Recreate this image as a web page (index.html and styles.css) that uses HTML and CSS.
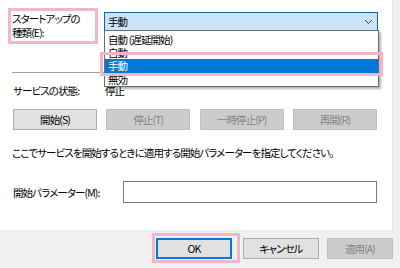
FILE: index.html
```html
<!DOCTYPE html>
<html lang="ja">
<head>
  <meta charset="UTF-8">
  <title>サービスのプロパティ</title>
  <link rel="stylesheet" href="styles.css">
</head>
<body>
  <div class="dialog">
    <div class="panel">
      <div class="startup-row">
        <div class="startup-label mark">スタートアップの<br>種類(E):</div>
        <div class="combo-wrap">
          <div class="combo">
            <span>手動</span>
            <svg class="chevron" width="9" height="6" viewBox="0 0 9 6"><path d="M1 1 L4.5 4.5 L8 1" fill="none" stroke="#444" stroke-width="1"/></svg>
          </div>
          <ul class="droplist">
            <li>自動 (遅延開始)</li>
            <li>自動</li>
            <li class="selected">手動</li>
            <li>無効</li>
          </ul>
          <div class="item-mark"></div>
        </div>
      </div>

      <div class="separator"></div>

      <div class="status-row">
        <span class="status-label">サービスの状態:</span>
        <span>停止</span>
      </div>

      <div class="service-buttons">
        <button class="btn">開始(S)</button>
        <button class="btn" disabled>停止(T)</button>
        <button class="btn" disabled>一時停止(P)</button>
        <button class="btn" disabled>再開(R)</button>
      </div>

      <p class="note">ここでサービスを開始するときに適用する開始パラメーターを指定してください。</p>

      <div class="param-row">
        <label class="param-label">開始パラメーター(M):</label>
        <div class="param-input"></div>
      </div>
    </div>

    <div class="footer">
      <span class="ok-mark"><button class="btn btn-default">OK</button></span>
      <button class="btn btn-footer">キャンセル</button>
      <button class="btn btn-footer" disabled>適用(A)</button>
    </div>
  </div>
</body>
</html>
```

FILE: styles.css
```css
body {
  margin: 0;
  width: 400px;
  height: 268px;
  overflow: hidden;
  background: #f0f0f0;
  font-family: "Noto Sans CJK JP", "Noto Sans", sans-serif;
  font-size: 10.5px;
  letter-spacing: -0.9px;
  font-feature-settings: "palt";
  color: #000;
}

.dialog {
  display: flex;
  flex-direction: column;
}

.panel {
  width: 393px;
  height: 230px;
  background: #fff;
  border-right: 1px solid #e3e3e3;
  padding-top: 8px;
  box-sizing: border-box;
}

/* スタートアップの種類 */
.startup-row {
  display: flex;
  align-items: flex-start;
  padding-left: 8px;
}

.mark {
  border: 3px solid #f3b5cd;
}

.startup-label {
  width: 83px;
  height: 29px;
  padding: 1px 0 0 1px;
  line-height: 14px;
}

.combo-wrap {
  position: relative;
  margin: 4px 0 0 6px;
}

.combo {
  width: 265px;
  height: 17px;
  line-height: 17px;
  border: 1px solid #1a5fa0;
  background: #cce4f7;
  display: flex;
  align-items: center;
  justify-content: space-between;
  padding: 0 4px 0 3px;
}

.droplist {
  position: absolute;
  top: 18px;
  left: 0;
  width: 273px;
  margin: 0;
  padding: 2px 0 0;
  list-style: none;
  background: #fff;
  border: 1px solid #6e6e6e;
  box-shadow: 2px 2px 2px rgba(0, 0, 0, 0.3);
  z-index: 2;
}

.droplist li {
  height: 13px;
  line-height: 13px;
  padding-left: 3px;
}

.droplist li.selected {
  background: #0078d7;
  color: #fff;
  height: 14px;
}

.item-mark {
  position: absolute;
  top: 40px;
  left: -4px;
  width: 277px;
  height: 18px;
  border: 3px solid #f3b5cd;
  z-index: 3;
}

.separator {
  border-top: 1px solid #a0a0a0;
  margin: 28px 15px 0 12px;
}

.status-row {
  display: flex;
  padding-left: 13px;
  margin-top: 11px;
  line-height: 14px;
}

.status-label {
  width: 92px;
}

.service-buttons {
  display: flex;
  justify-content: space-between;
  margin: 11px 15px 0 13px;
}

.btn {
  font: inherit;
  letter-spacing: inherit;
  font-feature-settings: "palt";
  width: 84px;
  height: 21px;
  padding: 0;
  background: #e1e1e1;
  border: 1px solid #adadad;
  color: #000;
}

.btn:disabled {
  background: #cccccc;
  border-color: #bfbfbf;
  color: #838383;
}

.note {
  margin: 16px 0 0 12px;
  line-height: 14px;
}

.param-row {
  display: flex;
  align-items: center;
  margin: 21px 15px 0 13px;
}

.param-label {
  width: 110px;
}

.param-input {
  flex: 1;
  height: 20px;
  border: 1px solid #7a7a7a;
  background: #fff;
}

/* 下部ボタン */
.footer {
  display: flex;
  align-items: flex-start;
  padding: 3px 0 0 152px;
}

.ok-mark {
  display: flex;
  border: 3px solid #f3b5cd;
  padding: 2px 5px 1px 1px;
}

.btn-default {
  width: 76px;
  border: 2px solid #0078d7;
}

.btn-footer {
  width: 76px;
  margin: 5px 0 0 3px;
}

.btn-footer + .btn-footer {
  margin-left: 8px;
  width: 66px;
}
```
